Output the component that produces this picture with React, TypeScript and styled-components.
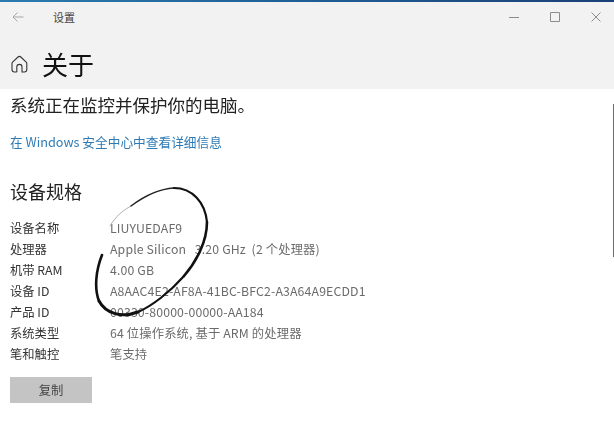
import { Fragment } from 'react'
import styled, { createGlobalStyle } from 'styled-components'

const GlobalStyle = createGlobalStyle`
  html, body {
    margin: 0;
    padding: 0;
    background: #fff;
  }
`

const PageStyled = styled.div`
  position: relative;
  width: 614px;
  height: 421px;
  overflow: hidden;
  font-family: 'Noto Sans CJK SC', 'Open Sans', sans-serif;
  color: #1c1c1c;
  filter: blur(0.4px);
`

const AccentStyled = styled.div`
  height: 2px;
  background: linear-gradient(90deg, #2b7bb0 0%, #1f5f95 50%, #1b3f78 100%);
`

const HeaderStyled = styled.header`
  height: 87px;
  background: #f2f2f2;
`

const TitleBarStyled = styled.div`
  height: 29px;
  display: flex;
  align-items: center;
  padding-left: 12px;
`

const TitleStyled = styled.span`
  margin-left: 29px;
  font-size: 11px;
  color: #444;
`

const WindowButtonsStyled = styled.div`
  margin-left: auto;
  display: flex;
  align-items: center;
  gap: 31px;
  padding-right: 13px;
  color: #8c8c8c;
`

const HeadingRowStyled = styled.div`
  display: flex;
  align-items: center;
  height: 40px;
  margin-top: 13px;
  padding-left: 10px;
`

const HeadingStyled = styled.h1`
  margin: 0 0 0 13px;
  font-size: 26px;
  font-weight: 400;
  color: #111;
  line-height: 40px;
`

const ContentStyled = styled.main`
  padding: 3px 10px 0;
`

const StatusStyled = styled.p`
  margin: 0;
  font-size: 17.5px;
  line-height: 26px;
  color: #222;
`

const LinkStyled = styled.a`
  display: block;
  margin-top: 14px;
  font-size: 12.7px;
  line-height: 20px;
  color: #2f7bb5;
`

const SectionTitleStyled = styled.h2`
  margin: 26px 0 0;
  font-size: 18px;
  font-weight: 400;
  line-height: 26px;
  color: #222;
`

const SpecListStyled = styled.dl`
  margin: 13px 0 0;
  display: grid;
  grid-template-columns: 100px 1fr;
  grid-auto-rows: 21px;
  align-items: center;
  font-size: 12.3px;
`

const SpecLabelStyled = styled.dt`
  color: #333;
`

const SpecValueStyled = styled.dd`
  margin: 0;
  color: #6b6b6b;
  letter-spacing: 0.14px;
  white-space: nowrap;
`

const CopyButtonStyled = styled.button`
  display: block;
  width: 82px;
  height: 26px;
  margin-top: 13px;
  padding: 0;
  border: 0;
  background: #c4c4c4;
  color: #444;
  font-family: inherit;
  font-size: 12.3px;
`

const ScrollEdgeStyled = styled.div`
  position: absolute;
  top: 104px;
  right: 0;
  width: 1px;
  height: 153px;
  background: #6e6e6e;
`

const InkStyled = styled.svg`
  position: absolute;
  inset: 0;
  pointer-events: none;
`

const specs = [
  ['设备名称', 'LIUYUEDAF9'],
  ['处理器', 'Apple Silicon\u00a0\u00a0\u00a03.20 GHz\u00a0\u00a0(2 个处理器)'],
  ['机带 RAM', '4.00 GB'],
  ['设备 ID', 'A8AAC4E2-AF8A-41BC-BFC2-A3A64A9ECDD1'],
  ['产品 ID', '00330-80000-00000-AA184'],
  ['系统类型', '64 位操作系统, 基于 ARM 的处理器'],
  ['笔和触控', '笔支持'],
]

const App = () => {
  return (
    <PageStyled>
      <GlobalStyle />
      <AccentStyled />
      <HeaderStyled>
        <TitleBarStyled>
          <svg width="12" height="12" viewBox="0 0 12 12" fill="none" stroke="#a8a8a8" strokeWidth="1">
            <path d="M11.5 6H1M5.5 1.5 1 6l4.5 4.5" />
          </svg>
          <TitleStyled>设置</TitleStyled>
          <WindowButtonsStyled>
            <svg width="10" height="10" viewBox="0 0 10 10" fill="none" stroke="currentColor">
              <path d="M0 5.5h10" />
            </svg>
            <svg width="10" height="10" viewBox="0 0 10 10" fill="none" stroke="currentColor">
              <path d="M.5.5h9v9h-9z" />
            </svg>
            <svg width="10" height="10" viewBox="0 0 10 10" fill="none" stroke="currentColor">
              <path d="m.5.5 9 9M9.5.5l-9 9" />
            </svg>
          </WindowButtonsStyled>
        </TitleBarStyled>
        <HeadingRowStyled>
          <svg width="19" height="19" viewBox="0 0 19 19" fill="none" stroke="#333" strokeWidth="1.1">
            <path d="M6.8 17H4.5A2.5 2.5 0 0 1 2 14.5V8.6a2 2 0 0 1 .6-1.4L8 2a2 2 0 0 1 2.8 0l5.4 5.2a2 2 0 0 1 .6 1.4v5.9a2.5 2.5 0 0 1-2.5 2.5H12V12a2.6 2.6 0 0 0-5.2 0V17" />
          </svg>
          <HeadingStyled>关于</HeadingStyled>
        </HeadingRowStyled>
      </HeaderStyled>
      <ContentStyled>
        <StatusStyled>系统正在监控并保护你的电脑。</StatusStyled>
        <LinkStyled>在 Windows 安全中心中查看详细信息</LinkStyled>
        <SectionTitleStyled>设备规格</SectionTitleStyled>
        <SpecListStyled>
          {specs.map(([label, value]) => (
            <Fragment key={label}>
              <SpecLabelStyled>{label}</SpecLabelStyled>
              <SpecValueStyled>{value}</SpecValueStyled>
            </Fragment>
          ))}
        </SpecListStyled>
        <CopyButtonStyled>复制</CopyButtonStyled>
      </ContentStyled>
      <ScrollEdgeStyled />
      <InkStyled width="614" height="421" viewBox="0 0 614 421" fill="none" strokeLinecap="round">
        <path d="M110 226C116 216 122 211 131 206" stroke="#9a9a9a" strokeWidth="0.8" />
        <path d="M131 206C143 197 158 189 174 188" stroke="#222" strokeWidth="1.5" />
        <path d="M174 188C192 188 205 202 207 222" stroke="#111" strokeWidth="2.2" />
        <path d="M207 222C207 242 196 262 184 276" stroke="#111" strokeWidth="2.6" />
        <path d="M184 276C170 292 152 306 138 312" stroke="#111" strokeWidth="2.2" />
        <path d="M138 312C122 318 106 314 99 301" stroke="#111" strokeWidth="3" />
        <path d="M99 301C94 288 96 270 102 255" stroke="#111" strokeWidth="2.6" />
      </InkStyled>
    </PageStyled>
  )
}

export default App
